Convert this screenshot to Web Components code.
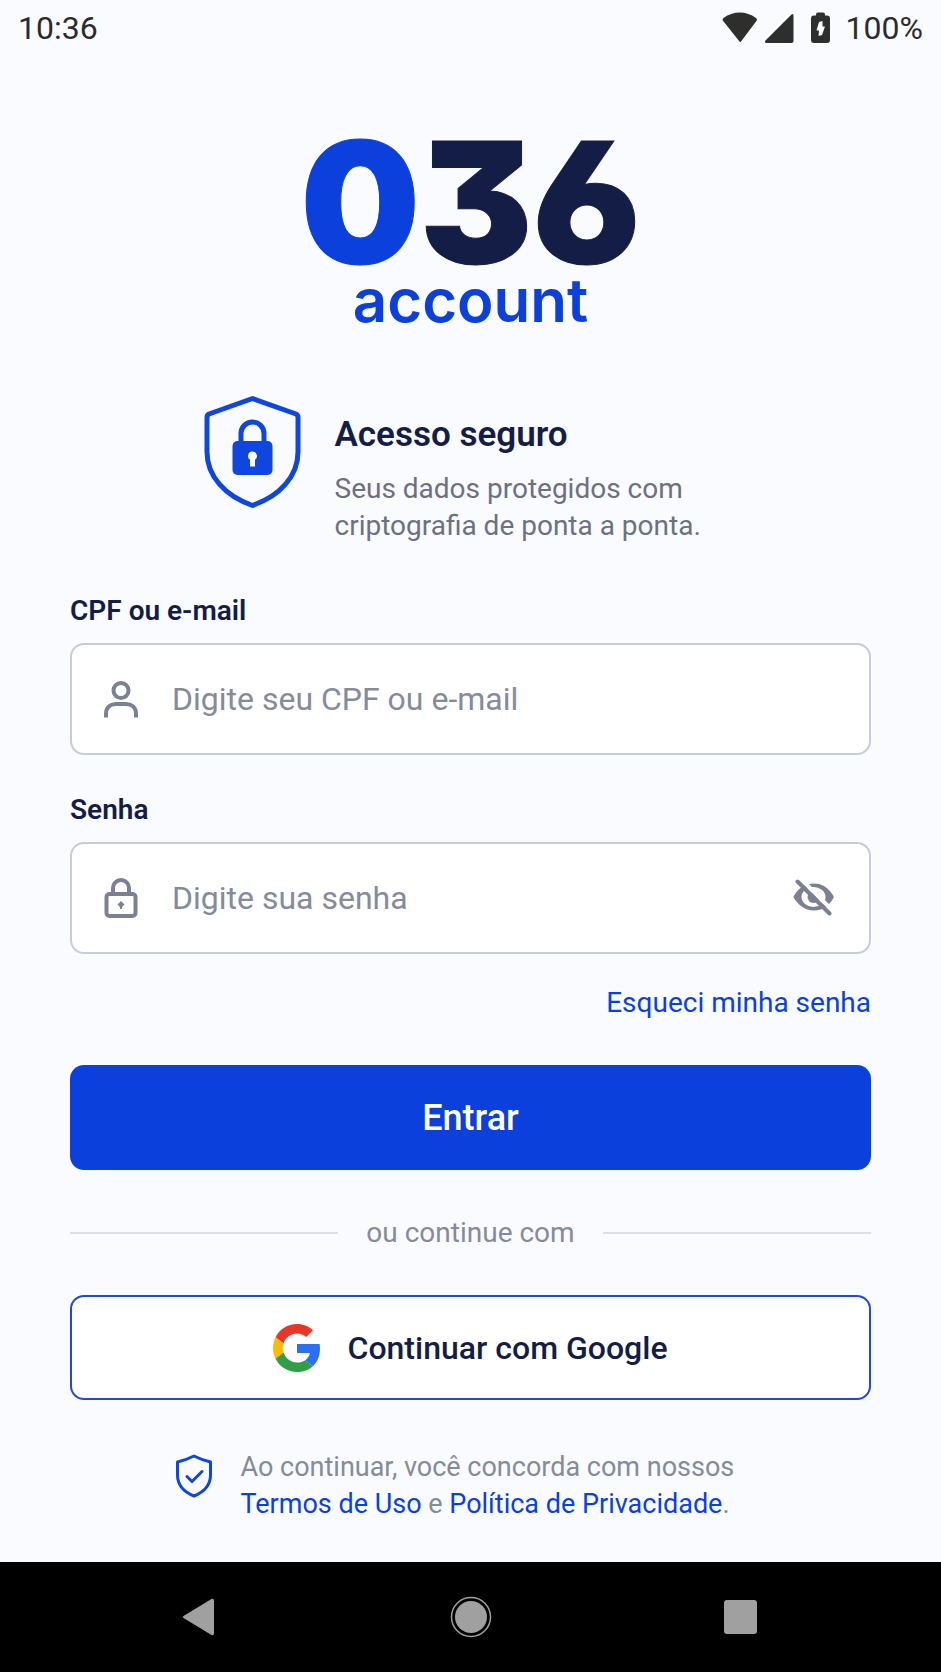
<!DOCTYPE html>
<html lang="pt-BR">
<head>
<meta charset="UTF-8">
<meta name="viewport" content="width=device-width, initial-scale=1.0">
<title>036 account</title>
<style>
    :root {
        --blue: #0b40dc;
        --link: #0a3fe6;
        --navy: #131d45;
        --text: #6b7182;
        --muted: #858b9a;
        --border: #c8ccd6;
        --radius: 14px;
    }

    body {
        margin: 0;
        background: #fafbfe;
        font-family: Roboto, "Liberation Sans", sans-serif;
        color: var(--navy);
    }
</style>
</head>
<body>
<login-page></login-page>

<script>
class StatusBar extends HTMLElement {
    constructor() {
        super();
        this.attachShadow({ mode: 'open' });
    }

    connectedCallback() {
        this.shadowRoot.innerHTML = `
            <style>
                :host {
                    display: flex;
                    justify-content: space-between;
                    align-items: center;
                    height: 56px;
                    padding: 0 18px;
                    font-size: 32px;
                    color: #2b2b2b;
                }
                .icons {
                    display: flex;
                    align-items: center;
                    gap: 12px;
                }
                svg {
                    display: block;
                    fill: #2e2e2c;
                }
            </style>
            <span>${this.getAttribute('time')}</span>
            <div class="icons">
                <svg width="112" height="34" viewBox="0 0 112 34">
                    <path d="M17.500 30.500 0.800 9.500 Q0 8 1.500 7 Q9 1.500 17.800 1.500 Q26.500 1.500 34 7 Q35.500 8 34.800 9.500 L19 30.500 Q18.300 31.500 17.500 30.500Z"/>
                    <path d="M43.500 29.500 69.500 3.500 Q71.500 2 71.500 4.500 V30 Q71.500 32 69.500 32 H44.500 Q42 31.500 43.500 29.500Z"/>
                    <path fill-rule="evenodd" d="M94 3.500 Q94 1.500 96 1.500 H101 Q103 1.500 103 3.500 V4.500 H105 Q108 4.500 108 7.500 V29 Q108 32 105 32 H92 Q89 32 89 29 V7.500 Q89 4.500 92 4.500 H94Z M100.500 10 97 11 94.500 19.500 H97 L96.500 25 100 24 103 15.500 H100.500Z"/>
                </svg>
                <span>${this.getAttribute('battery')}</span>
            </div>
        `;
    }
}

class BrandLogo extends HTMLElement {
    constructor() {
        super();
        this.attachShadow({ mode: 'open' });
    }

    connectedCallback() {
        this.shadowRoot.innerHTML = `
            <style>
                :host {
                    display: flex;
                    flex-direction: column;
                    align-items: center;
                    gap: 6px;
                    font-family: Inter, Roboto, sans-serif;
                }
                .number {
                    font-size: 168px;
                    line-height: 128px;
                    font-weight: 900;
                    /* flat-top three and open six */
                    font-feature-settings: "cv09", "cv03";
                    -webkit-text-stroke: 1px currentColor;
                }
                .zero, .name {
                    color: var(--blue);
                }
                .name {
                    font-size: 60px;
                    line-height: 56px;
                    font-weight: 600;
                }
            </style>
            <div class="number"><span class="zero">0</span>36</div>
            <div class="name">account</div>
        `;
    }
}

class SecureNote extends HTMLElement {
    constructor() {
        super();
        this.attachShadow({ mode: 'open' });
    }

    connectedCallback() {
        this.shadowRoot.innerHTML = `
            <style>
                :host {
                    display: flex;
                    align-items: flex-start;
                    gap: 34px;
                    width: 100%;
                    max-width: 534px;
                    margin: 0 auto;
                }
                svg {
                    flex: none;
                    display: block;
                }
                .text {
                    padding-top: 21px;
                }
                h1 {
                    margin: 0 0 15px;
                    font-size: 35px;
                    line-height: 40px;
                    font-weight: 600;
                }
                p {
                    margin: 0;
                    font-size: 28px;
                    line-height: 37px;
                    color: var(--text);
                }
            </style>
            <svg width="97" height="114" viewBox="0 0 97 114" fill="none" stroke="#0f46e0" stroke-width="5" stroke-linejoin="round">
                <path d="M48.500 4.500 92 20 Q94 21 94 23.500 V58 C94 82 76 102 48.500 111.500 C21 102 3 82 3 58 V23.500 Q3 21 5 20Z"/>
                <path d="M37 50 V39.500 A11.500 11.500 0 0 1 60 39.500 V50"/>
                <rect x="28.500" y="47" width="40" height="34" rx="5" fill="#0f46e0" stroke="none"/>
                <path d="M48.500 57.500 a4.500 4.500 0 0 1 2.500 8.200 V72.500 H46 V65.700 A4.500 4.500 0 0 1 48.500 57.500Z" fill="#fff" stroke="none"/>
            </svg>
            <div class="text">
                <h1><slot name="title"></slot></h1>
                <p><slot></slot></p>
            </div>
        `;
    }
}

const fieldIcons = {
    user: `
        <circle cx="17" cy="11.500" r="7.500"/>
        <path d="M2 38.500 V35 C2 28 7 25 12 25 H22 C27 25 32 28 32 35 V38.500"/>`,
    lock: `
        <rect x="2.500" y="16" width="29" height="22" rx="3"/>
        <path d="M9 16 V10 A8 8 0 0 1 25 10 V16"/>
        <path d="M17 23 20.500 26.500 18 29 V31 H16 V29 L13.500 26.500Z" fill="#7b8192" stroke="none"/>`
};

class TextField extends HTMLElement {
    constructor() {
        super();
        this.attachShadow({ mode: 'open' });
    }

    connectedCallback() {
        const type = this.getAttribute('type') || 'text';
        const toggle = type === 'password' ? `
            <button type="button" aria-label="Mostrar senha">
                <svg width="42" height="38" viewBox="0 0 42 38">
                    <path fill="#7b8192" fill-rule="evenodd" d="M0.800 19 Q0.300 18 0.800 17 C5 9 13 4.500 21 4.500 C29 4.500 36 9 40.500 17 Q41 18 40.500 19 C36 27 29 31.500 21 31.500 C13 31.500 6 27 0.800 19Z M8.500 18 A12 10 0 0 0 32.500 18 A12 10 0 0 0 8.500 18Z"/>
                    <circle cx="20.500" cy="18" r="6" fill="#7b8192"/>
                    <path stroke="#fff" stroke-width="4" d="M8 0 40 32"/>
                    <path stroke="#7b8192" stroke-width="4" stroke-linecap="round" d="M4.500 2.500 36.500 34.500"/>
                </svg>
            </button>` : '';

        this.shadowRoot.innerHTML = `
            <style>
                :host {
                    display: block;
                }
                label {
                    display: block;
                    margin-bottom: 14px;
                    font-size: 28px;
                    line-height: 36px;
                    font-weight: 600;
                }
                .box {
                    display: flex;
                    align-items: center;
                    gap: 34px;
                    height: 112px;
                    padding: 0 34px 0 32px;
                    box-sizing: border-box;
                    background: #fff;
                    border: 2px solid var(--border);
                    border-radius: var(--radius);
                }
                svg {
                    display: block;
                    flex: none;
                }
                input {
                    flex: 1;
                    min-width: 0;
                    height: 100%;
                    padding: 0;
                    border: 0;
                    outline: 0;
                    background: none;
                    font: inherit;
                    font-size: 32px;
                    color: var(--navy);
                }
                input::placeholder {
                    color: var(--muted);
                    opacity: 1;
                }
                button {
                    padding: 0;
                    border: 0;
                    background: none;
                    cursor: pointer;
                }
            </style>
            <label for="field">${this.getAttribute('label')}</label>
            <div class="box">
                <svg width="34" height="40" viewBox="0 0 34 40" fill="none" stroke="#7b8192" stroke-width="4">
                    ${fieldIcons[this.getAttribute('icon')]}
                </svg>
                <input id="field" type="${type}" placeholder="${this.getAttribute('placeholder')}">
                ${toggle}
            </div>
        `;
    }
}

class AppButton extends HTMLElement {
    constructor() {
        super();
        this.attachShadow({ mode: 'open' });
    }

    connectedCallback() {
        this.shadowRoot.innerHTML = `
            <style>
                :host {
                    display: block;
                }
                button {
                    display: flex;
                    align-items: center;
                    justify-content: center;
                    gap: 26px;
                    width: 100%;
                    height: 105px;
                    padding: 0;
                    border: 0;
                    border-radius: var(--radius);
                    background: var(--blue);
                    color: #fff;
                    font: inherit;
                    font-size: 36px;
                    font-weight: 500;
                    cursor: pointer;
                }
                :host([variant="outline"]) button {
                    border: 2px solid #1f49df;
                    background: #fff;
                    color: var(--navy);
                    font-size: 32px;
                }
            </style>
            <button type="button"><slot name="icon"></slot><slot></slot></button>
        `;
    }
}

class TextDivider extends HTMLElement {
    constructor() {
        super();
        this.attachShadow({ mode: 'open' });
    }

    connectedCallback() {
        this.shadowRoot.innerHTML = `
            <style>
                :host {
                    display: flex;
                    align-items: center;
                    gap: 28px;
                    font-size: 28px;
                    line-height: 36px;
                    color: var(--muted);
                }
                :host::before, :host::after {
                    content: '';
                    flex: 1;
                    height: 2px;
                    background: #dcdfe7;
                }
            </style>
            <slot></slot>
        `;
    }
}

class TermsNote extends HTMLElement {
    constructor() {
        super();
        this.attachShadow({ mode: 'open' });
    }

    connectedCallback() {
        this.shadowRoot.innerHTML = `
            <style>
                :host {
                    display: flex;
                    align-items: flex-start;
                    gap: 28px;
                    width: 100%;
                    max-width: 592px;
                    margin: 0 auto;
                }
                svg {
                    flex: none;
                    display: block;
                    margin-top: 5px;
                }
                p {
                    margin: 0;
                    font-size: 27px;
                    line-height: 37px;
                    color: var(--muted);
                }
                a {
                    color: var(--link);
                    text-decoration: none;
                }
            </style>
            <svg width="38" height="44" viewBox="0 0 38 44" fill="none" stroke="#0f46e0" stroke-width="3" stroke-linejoin="round" stroke-linecap="round">
                <path d="M19 2 Q27 6 35.500 8 V21 C35.500 31 29 38 19 42 C9 38 2.500 31 2.500 21 V8 Q11 6 19 2Z"/>
                <path d="M12 22.500 17 27.500 27 17.500"/>
            </svg>
            <p>Ao continuar, você concorda com nossos <a href="#termos">Termos de Uso</a> e <a href="#privacidade">Política de Privacidade</a>.</p>
        `;
    }
}

class NavBar extends HTMLElement {
    constructor() {
        super();
        this.attachShadow({ mode: 'open' });
    }

    connectedCallback() {
        this.shadowRoot.innerHTML = `
            <style>
                :host {
                    display: grid;
                    grid-template-columns: repeat(3, 1fr);
                    place-items: center;
                    height: 110px;
                    padding: 0 64px;
                    background: #000;
                }
                button {
                    padding: 0;
                    border: 0;
                    background: none;
                }
                svg {
                    display: block;
                    fill: #a0a0a0;
                }
            </style>
            <button type="button" aria-label="Voltar">
                <svg width="42" height="42" viewBox="0 0 42 42"><path d="M4.500 20 32.500 3 Q35 2 35 5 V37 Q35 40 32.500 39 L4.500 22 Q3 21 4.500 20Z"/></svg>
            </button>
            <button type="button" aria-label="Início">
                <svg width="42" height="42" viewBox="0 0 42 42"><circle cx="21" cy="21" r="16"/><circle cx="21" cy="21" r="19.500" fill="none" stroke="#a0a0a0" stroke-width="1.500"/></svg>
            </button>
            <button type="button" aria-label="Recentes">
                <svg width="42" height="42" viewBox="0 0 42 42"><rect x="3" y="4" width="33" height="34" rx="3"/></svg>
            </button>
        `;
    }
}

class LoginPage extends HTMLElement {
    constructor() {
        super();
        this.attachShadow({ mode: 'open' });
    }

    connectedCallback() {
        this.shadowRoot.innerHTML = `
            <style>
                :host {
                    display: flex;
                    flex-direction: column;
                    min-height: 100vh;
                }
                main {
                    flex: 1;
                    padding: 82px 70px 39px;
                }
                secure-note {
                    margin-top: 66px;
                    margin-bottom: 49px;
                }
                form {
                    display: flex;
                    flex-direction: column;
                }
                text-field + text-field {
                    margin-top: 37px;
                }
                .forgot {
                    align-self: flex-end;
                    margin: 31px 0 44px;
                    font-size: 28px;
                    line-height: 36px;
                    color: var(--link);
                    text-decoration: none;
                }
                text-divider {
                    margin: 45px 0 44px;
                }
                terms-note {
                    margin-top: 49px;
                }
            </style>
            <status-bar time="10:36" battery="100%"></status-bar>
            <main>
                <brand-logo></brand-logo>
                <secure-note>
                    <span slot="title">Acesso seguro</span>
                    Seus dados protegidos com criptografia de ponta a ponta.
                </secure-note>
                <form>
                    <text-field label="CPF ou e-mail" icon="user" placeholder="Digite seu CPF ou e-mail"></text-field>
                    <text-field label="Senha" icon="lock" type="password" placeholder="Digite sua senha"></text-field>
                    <a class="forgot" href="#senha">Esqueci minha senha</a>
                    <app-button>Entrar</app-button>
                </form>
                <text-divider>ou continue com</text-divider>
                <app-button variant="outline">
                    <svg slot="icon" width="48" height="48" viewBox="0 0 48 48">
                        <path fill="#ea3529" d="M24 9.500c3.540 0 6.710 1.220 9.210 3.600l6.850-6.850C35.900 2.380 30.470 0 24 0 14.620 0 6.510 5.380 2.560 13.220l7.980 6.190C12.430 13.720 17.740 9.500 24 9.500z"/>
                        <path fill="#2a6ff5" d="M46.980 24.550c0-1.570-.150-3.090-.380-4.550H24v9.020h12.940c-.580 2.960-2.260 5.480-4.780 7.180l7.730 6c4.510-4.180 7.090-10.360 7.090-17.650z"/>
                        <path fill="#fbbc05" d="M10.530 28.590c-.480-1.450-.760-2.990-.760-4.590s.270-3.140.760-4.590l-7.980-6.190C.920 16.460 0 20.120 0 24c0 3.880.920 7.540 2.560 10.780l7.970-6.190z"/>
                        <path fill="#2f9e44" d="M24 48c6.480 0 11.930-2.130 15.890-5.810l-7.730-6c-2.150 1.450-4.920 2.300-8.160 2.300-6.260 0-11.570-4.220-13.470-9.910l-7.980 6.190C6.510 42.620 14.620 48 24 48z"/>
                    </svg>
                    Continuar com Google
                </app-button>
                <terms-note></terms-note>
            </main>
            <nav-bar></nav-bar>
        `;
    }
}

customElements.define('status-bar', StatusBar);
customElements.define('brand-logo', BrandLogo);
customElements.define('secure-note', SecureNote);
customElements.define('text-field', TextField);
customElements.define('app-button', AppButton);
customElements.define('text-divider', TextDivider);
customElements.define('terms-note', TermsNote);
customElements.define('nav-bar', NavBar);
customElements.define('login-page', LoginPage);
</script>
</body>
</html>
